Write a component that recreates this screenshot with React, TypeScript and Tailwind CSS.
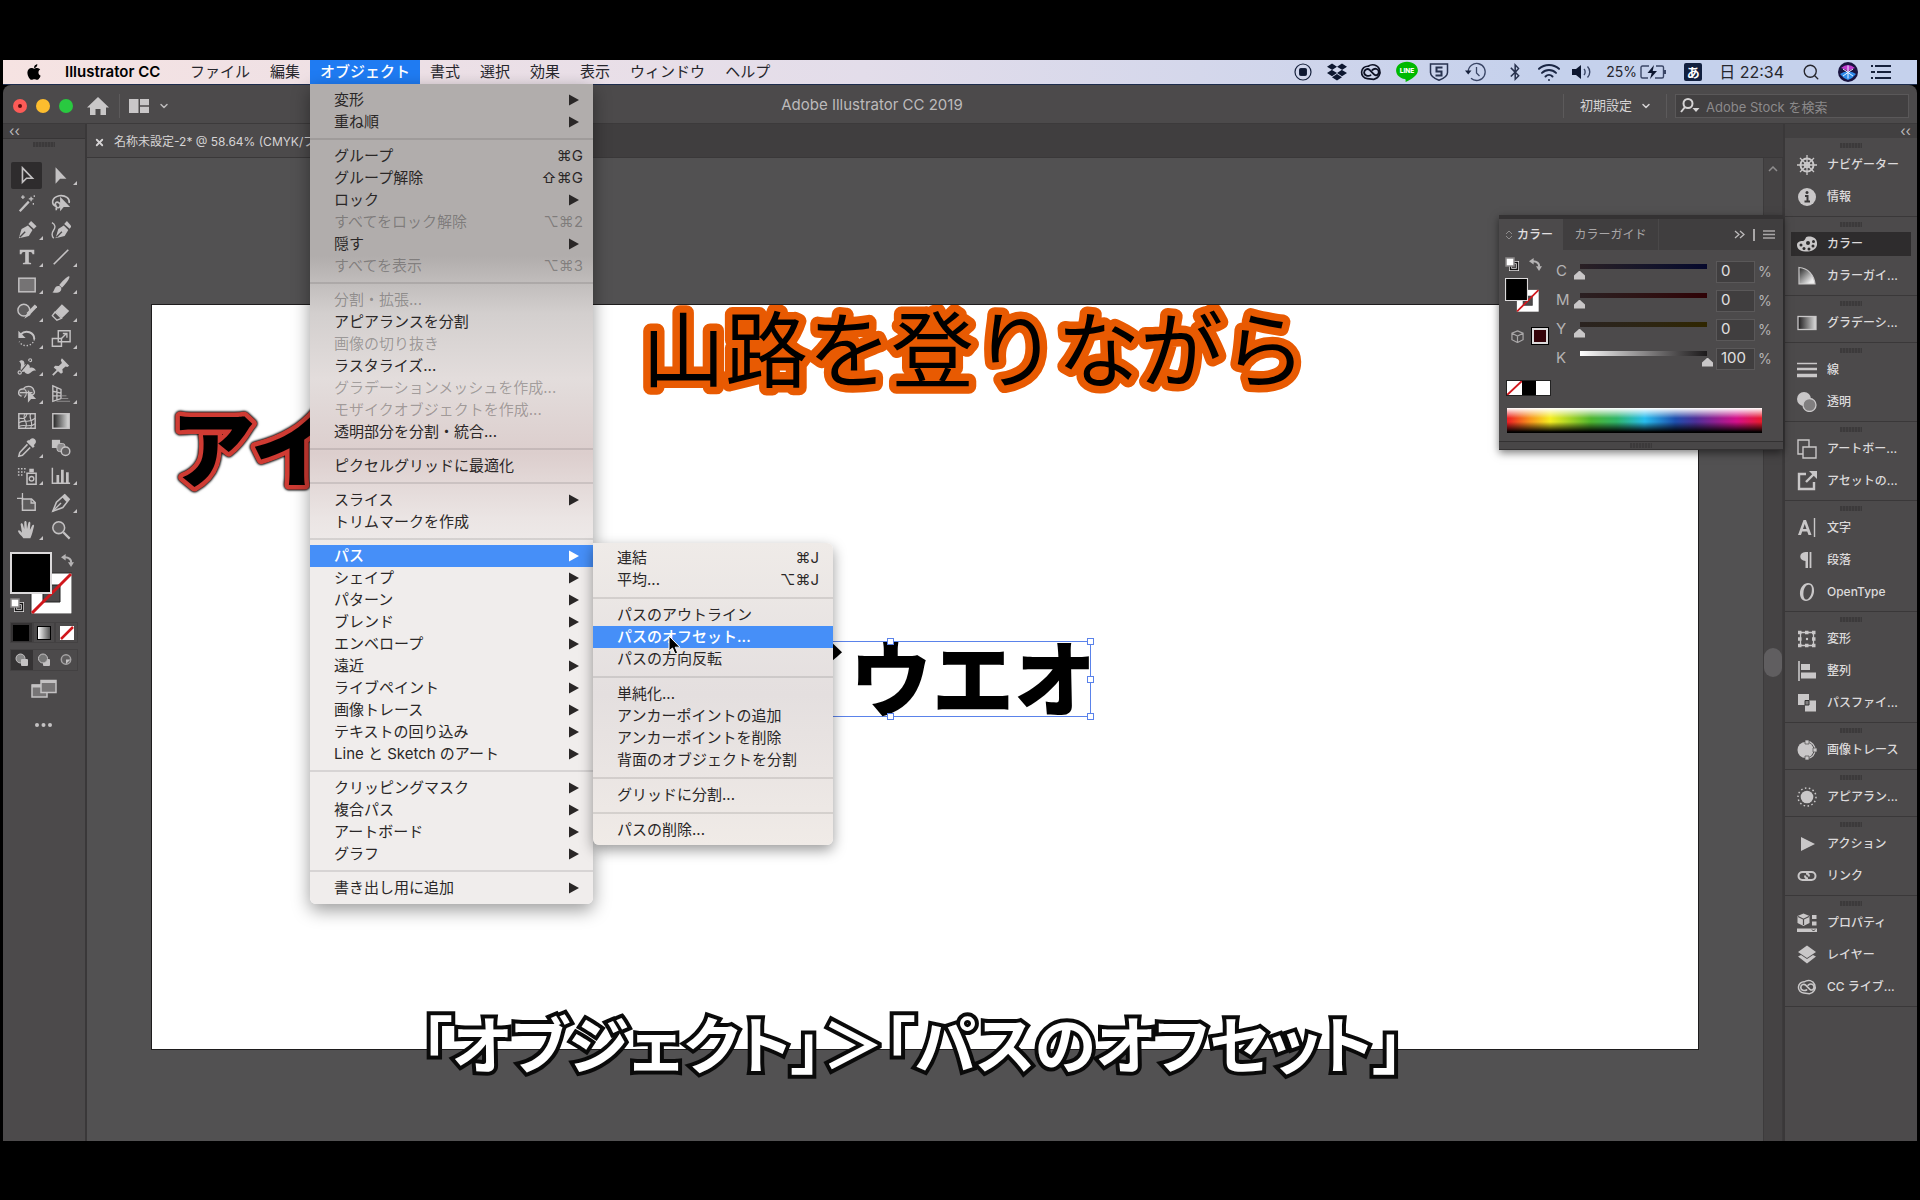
import * as React from "react";
import { FaApple, FaBluetoothB, FaDropbox } from "react-icons/fa";
import { ChevronDown, Search, Wifi, X } from "lucide-react";
import clsx from "clsx";

type Entry = { label: string; keys?: string; sub?: boolean; off?: boolean; on?: boolean } | "-";

const barItems = ["ファイル", "編集", "オブジェクト", "書式", "選択", "効果", "表示", "ウィンドウ", "ヘルプ"];

const objectMenu: Entry[] = [
  { label: "変形", sub: true },
  { label: "重ね順", sub: true },
  "-",
  { label: "グループ", keys: "⌘G" },
  { label: "グループ解除", keys: "⇧⌘G" },
  { label: "ロック", sub: true },
  { label: "すべてをロック解除", keys: "⌥⌘2", off: true },
  { label: "隠す", sub: true },
  { label: "すべてを表示", keys: "⌥⌘3", off: true },
  "-",
  { label: "分割・拡張...", off: true },
  { label: "アピアランスを分割" },
  { label: "画像の切り抜き", off: true },
  { label: "ラスタライズ..." },
  { label: "グラデーションメッシュを作成...", off: true },
  { label: "モザイクオブジェクトを作成...", off: true },
  { label: "透明部分を分割・統合..." },
  "-",
  { label: "ピクセルグリッドに最適化" },
  "-",
  { label: "スライス", sub: true },
  { label: "トリムマークを作成" },
  "-",
  { label: "パス", sub: true, on: true },
  { label: "シェイプ", sub: true },
  { label: "パターン", sub: true },
  { label: "ブレンド", sub: true },
  { label: "エンベロープ", sub: true },
  { label: "遠近", sub: true },
  { label: "ライブペイント", sub: true },
  { label: "画像トレース", sub: true },
  { label: "テキストの回り込み", sub: true },
  { label: "Line と Sketch のアート", sub: true },
  "-",
  { label: "クリッピングマスク", sub: true },
  { label: "複合パス", sub: true },
  { label: "アートボード", sub: true },
  { label: "グラフ", sub: true },
  "-",
  { label: "書き出し用に追加", sub: true },
];

const pathMenu: Entry[] = [
  { label: "連結", keys: "⌘J" },
  { label: "平均...", keys: "⌥⌘J" },
  "-",
  { label: "パスのアウトライン" },
  { label: "パスのオフセット...", on: true },
  { label: "パスの方向反転" },
  "-",
  { label: "単純化..." },
  { label: "アンカーポイントの追加" },
  { label: "アンカーポイントを削除" },
  { label: "背面のオブジェクトを分割" },
  "-",
  { label: "グリッドに分割..." },
  "-",
  { label: "パスの削除..." },
];

function MenuList({ entries, rule, row }: { entries: Entry[]; rule: string; row: string }) {
  return (
    <>
      {entries.map((e, i) =>
        e === "-" ? (
          <div key={i} role="separator" className={clsx("flex items-center", rule)}>
            <div className="h-[2px] w-full bg-black/10" />
          </div>
        ) : (
          <button
            key={i}
            disabled={e.off}
            className={clsx(
              "flex h-[22px] w-full items-center justify-between text-left text-[15px] leading-[22px] whitespace-nowrap",
              row,
              e.on ? "bg-[#468ff8] font-medium text-white" : e.off ? "text-black/30" : "text-[#2a2727]",
            )}
          >
            <span>{e.label}</span>
            {e.keys && <span>{e.keys}</span>}
            {e.sub && (
              <svg viewBox="0 0 10 12" className="mr-1 h-3 w-[10px]" fill="currentColor">
                <path d="M0 0.5 10 6 0 11.5z" />
              </svg>
            )}
          </button>
        ),
      )}
    </>
  );
}

function CloudIcon({ className }: { className: string }) {
  return (
    <svg viewBox="0 0 24 19" className={className} fill="none" stroke="currentColor" strokeLinecap="round">
      <path strokeWidth="1.800" d="M9 3.200A6.700 6.700 0 1 0 8 16.700L15 17.500A8 8 0 1 0 9 3.200z" />
      <path strokeWidth="2" d="M11.500 13C9 14.500 4.500 13.500 4.500 10c0-3.500 4-4.800 6-2.700l5 5c2.500 2 5-.2 5-2.800 0-3-4-5-7-2.200" />
    </svg>
  );
}

function MenuBar() {
  return (
    <header className="relative z-20 flex h-[25px] items-center border-b border-[#1d2c4c] bg-linear-to-r from-[#f6e3e2] via-[#e3ddea] via-45% to-[#c5d1ec] to-80% text-[15px] leading-6 text-[#26262c]">
      <a href="#apple" aria-label="Apple" className="ml-[22px] w-[18px] text-black">
        <FaApple className="size-[18px]" />
      </a>
      <button className="ml-[22px] w-[111px] text-left font-semibold whitespace-nowrap text-black">Illustrator CC</button>
      <nav className="flex h-full pl-1">
        {barItems.map((item) => (
          <div key={item} className="relative h-full">
            <button
              className={clsx("h-6 px-[10px] whitespace-nowrap", item === "オブジェクト" && "bg-[#1f7bf2] font-medium text-white")}
            >
              {item}
            </button>
            {item === "オブジェクト" && <ObjectMenu />}
          </div>
        ))}
      </nav>
      <div className="ml-auto flex items-center pr-[26px]">
        <svg viewBox="0 0 18 18" className="mr-[15px] size-[18px]" fill="none" stroke="#16213c">
          <circle cx="9" cy="9" r="8" strokeWidth="1.200" />
          <rect x="5.500" y="5.500" width="7" height="7" rx="1" fill="#0d1730" />
        </svg>
        <FaDropbox className="mr-[13px] size-5 text-[#0d1730]" />
        <CloudIcon className="mr-[13px] h-[18px] w-[22px] text-[#0d1124]" />
        <svg viewBox="0 0 22 20" className="mr-[10px] h-[22px] w-6">
          <path fill="#00b900" d="M11 .5C5.300.5 1 4 1 8.600c0 4 3.300 7 8 7.900.9.200.8 1.200.7 2.700C15 16.800 21 13 21 8.600 21 4 16.700.5 11 .5z" />
          <text x="11" y="11" textAnchor="middle" fontSize="6" fontWeight="800" fill="#fff" fontFamily="Inter">LINE</text>
        </svg>
        <svg viewBox="0 0 20 18" className="mr-4 h-[18px] w-5" fill="none" stroke="#27324f">
          <path strokeWidth="1.500" d="M1.500 1h17v8.500c0 4-4 6-8.500 7.800C5.500 15.500 1.500 13.500 1.500 9.500z" />
          <path strokeWidth="2" d="M13.500 4.500h-6v4h5v4H6.500" />
        </svg>
        <svg viewBox="0 0 22 20" className="mr-[19px] h-5 w-[22px]" fill="none" stroke="#3a4666" strokeWidth="1.300">
          <path d="M3.200 10A8.500 8.500 0 1 1 6 16.300M11.500 5v6l3 3" />
          <path d="M0 8.500h6.500l-3.300 4z" fill="#16213c" stroke="none" />
        </svg>
        <FaBluetoothB className="mr-[13px] size-[18px] text-[#27324f]" />
        <Wifi className="mr-[11px] size-6 text-[#1b2745]" strokeWidth={2} />
        <svg viewBox="0 0 20 16" className="mr-[14px] h-4 w-5">
          <path fill="#0d1730" d="M0 5h4l5-4v14l-5-4H0z" />
          <path fill="none" stroke="#3a4666" strokeWidth="1.400" d="M12 5c1.500 1.500 1.500 4.500 0 6M15.500 2.500c3 3 3 8 0 11" />
        </svg>
        <span className="mr-[2px] w-8 text-[14px] whitespace-nowrap">25%</span>
        <svg viewBox="0 0 27 16" className="mr-[17px] h-4 w-[27px]" fill="none" stroke="#3a4666" strokeWidth="1.400">
          <path d="M9 2H2.500Q1 2 1 3.500v9Q1 14 2.500 14H8M16 2h6q1.500 0 1.500 1.500v9Q23.500 14 22 14h-7" />
          <path d="M14 1 7.500 9h4.200L10 15l7-8h-4.300z" fill="#0d1730" stroke="none" />
          <path d="M25 6v4" strokeWidth="2" />
        </svg>
        <span className="mr-[17px] h-[18px] w-[18px] rounded-xs bg-[#12203f] text-center text-[13px] leading-[18px] font-bold text-white">あ</span>
        <span className="mr-[18px] text-[16px] whitespace-nowrap">日 22:34</span>
        <Search className="mr-[18px] size-[18px]" strokeWidth={1.800} />
        <svg viewBox="0 0 20 20" className="mr-[13px] size-5">
          <circle cx="10" cy="10" r="10" fill="#1a1440" />
          <path d="M3 6q7-6 14 0-6 2-7 4Q8 7 3 6z" fill="#c03bd0" />
          <path d="M2 12q5-3 8-2 3-1 8 2-3 4-8 6-5-2-8-6z" fill="#2f8bea" />
          <path d="M10 3.500v13M5 7l10 7M15 7 5 14" stroke="#e9f2ff" strokeWidth="1" />
        </svg>
        <svg viewBox="0 0 20 16" className="h-4 w-5" stroke="#16213c" strokeWidth="2">
          <path d="M4 2h16M6 8h14M4 14h16M0 2h2M0 8h4M0 14h2" />
        </svg>
      </div>
    </header>
  );
}

function ObjectMenu() {
  return (
    <div className="absolute top-6 left-0 w-[283px] rounded-b-md bg-[linear-gradient(180deg,#b1adac_0%,#b1adac_21%,#d3cfce_28%,#e3dddc_36%,#dccecd_45%,#ebe5e4_53%,#f0edec_58%)] py-[5px] shadow-[0_6px_18px_rgba(0,0,0,0.4)]">
      <MenuList entries={objectMenu} rule="h-3" row="pl-6 pr-[10px]" />
      <div className="absolute top-[459px] left-full w-[240px] rounded-md rounded-tl-none bg-linear-to-b from-[#efebe8] via-[#e4dfdf] to-[#f0ebe7] py-1 shadow-[0_5px_14px_rgba(0,0,0,0.4)]">
        <MenuList entries={pathMenu} rule="h-[13px]" row="pl-6 pr-[14px]" />
        <svg viewBox="0 0 14 20" className="absolute top-[92px] left-[75px] h-5 w-[14px]">
          <path d="M1 1v15l3.500-3 2.500 6 2.700-1.200-2.500-5.600H12z" fill="#000" stroke="#fff" strokeWidth="1" />
        </svg>
      </div>
    </div>
  );
}

function TitleBar() {
  return (
    <div className="flex h-[39px] items-center rounded-t-lg border-b border-[#3c3a3b] bg-[#4c4a4b] pt-[3px] text-[#bcbabb]">
      <div className="flex w-[178px] items-center">
        <button aria-label="閉じる" className="ml-[10px] size-[14px] rounded-full bg-[#fc5b57] p-[5px]">
          <span className="block size-1 rounded-full bg-[#5c0d0c]" />
        </button>
        <button aria-label="しまう" className="ml-[9px] size-[14px] rounded-full bg-[#fdbd2e]" />
        <button aria-label="拡大" className="ml-[9px] size-[14px] rounded-full bg-[#29c940]" />
        <button aria-label="ホーム" className="ml-[14px]">
          <svg viewBox="0 0 22 20" className="h-5 w-[22px]" fill="#c9c7c8">
            <path d="M11 1 0 11.500h3V19h5.500v-6h5v6H19v-7.500h3z" />
          </svg>
        </button>
        <span className="ml-[10px] h-6 w-px bg-[#5c5a5b]" />
        <button aria-label="レイアウト" className="ml-[9px] flex items-center gap-[9px]">
          <svg viewBox="0 0 20 14" className="h-[14px] w-5" fill="#c9c7c8">
            <path d="M0 0h9.500v14H0zM11 0h9v6.200h-9zM11 7.700h9V14h-9z" />
          </svg>
          <ChevronDown className="size-3" strokeWidth={3} />
        </button>
      </div>
      <h1 className="flex-1 text-center text-[15px]">Adobe Illustrator CC 2019</h1>
      <div className="flex items-center pr-2">
        <span className="h-6 w-px bg-[#5c5a5b]" />
        <button className="flex w-[102px] items-center justify-between pr-[14px] pl-4 text-[13px] whitespace-nowrap text-[#d6d4d5]">
          初期設定
          <ChevronDown className="size-3" strokeWidth={3} />
        </button>
        <span className="mr-2 h-6 w-px bg-[#5c5a5b]" />
        <label className="flex h-6 w-[234px] items-center gap-[6px] border border-[#5a5859] bg-[#424041] pl-1">
          <svg viewBox="0 0 20 16" className="h-4 w-5 shrink-0" fill="none" stroke="#d6d4d5" strokeWidth="2">
            <circle cx="8" cy="5.500" r="4.500" />
            <path d="M5 9 1 14" />
            <path d="M12.500 10h7L16 14z" fill="#d6d4d5" stroke="none" />
          </svg>
          <input
            aria-label="Adobe Stock を検索"
            placeholder="Adobe Stock を検索"
            className="h-full w-full min-w-0 bg-transparent pt-[3px] text-[13px] outline-none placeholder:text-[#8c8a8b]"
          />
        </label>
      </div>
    </div>
  );
}

function Grip() {
  return <div className="mx-auto h-[5px] w-[22px] bg-[repeating-linear-gradient(90deg,#3c3a3b_0_2px,#444243_2px_3px)]" />;
}

/* glyphs are drawn on a 22x22 grid */
const toolGlyphs: [string, boolean, React.ReactNode][] = [
  ["選択", false, <path key="a" d="M6 2v16l4.500-4.500H17z" fill="none" strokeWidth="1.800" />],
  ["ダイレクト選択", true, <path key="a" d="M5 1.500v18l5-5.500h7z" stroke="none" />],
  ["自動選択", false, <><path d="m3 20 10-10.500" strokeWidth="2.500" fill="none" /><path d="M15.500 4v5M13 6.500h5M6.500 2.500v4M4.500 4.500h4M18 11v2M19 2.500v2" strokeWidth="1.400" fill="none" /></>],
  ["なげなわ", false, <><path d="M6 15c-6-2-6-10 3-12 7-1 12 3 11 8M6 15c-3-4 0-6 3-4s0 6-2 5-1 3-1 3" fill="none" strokeWidth="1.800" /><path d="M10 4v16l4-4.500h7z" stroke="none" /></>],
  ["ペン", true, <><path d="m2 20 3-10 7-4 5 5-4 6.500z" stroke="none" /><path d="m12.500 4.500 3-3.500 6 6-3 3z" stroke="none" /><path d="m3 19 6-6" stroke="#4c4a4b" strokeWidth="1.500" /></>],
  ["曲線", false, <><path d="m5 20 3-10 6-4 5 5-4 6.500z" stroke="none" /><path d="m14.500 4.500 3-3.500 5 6-2 2.500z" stroke="none" /><path d="m6 19 6-6" stroke="#4c4a4b" strokeWidth="1.500" /><path d="M1 3c4 2 4 5 2 8s-3 6 0 9" fill="none" strokeWidth="1.500" /></>],
  ["文字", true, <path key="a" d="M3 3h16v5h-2c0-2-1-2.500-4-2.500V17l2.500.5V19h-9v-1.500L9 17V5.500C6 5.500 5 6 5 8H3z" stroke="none" />],
  ["直線", true, <path key="a" d="M3 19 19 3" strokeWidth="1.800" />],
  ["長方形", true, <rect key="a" x="2" y="3.500" width="18" height="15" fill="#757374" strokeWidth="1.600" />],
  ["ブラシ", true, <><path d="M20 1.500c2 1-5 10-8 12.500l-3-3C12 7.500 18 1 20 1.500z" stroke="none" /><path d="M8 12c3 0 4.500 3 2.500 5.500S4 20 1.500 19C4 18 3.500 12 8 12z" stroke="none" /></>],
  ["Shaper", true, <><circle cx="7.500" cy="9" r="6.500" fill="#5e5c5d" strokeWidth="1.600" /><path d="M21 4 12 13.500" strokeWidth="4" /><path d="m12 11 3 3-7 4.500z" stroke="none" /></>],
  ["消しゴム", true, <><path d="M12 2.500 20 10l-8 8-7.500-7.500z" stroke="none" /><path d="m4.500 11-3 4 5 5 5-2z" strokeWidth="1.500" fill="#4c4a4b" /></>],
  ["回転", true, <><path d="M4 6c6-6 15-2 15 5" fill="none" strokeWidth="2.200" /><path d="M1.500 2v8h8z" stroke="none" /><path d="M19 11c-1 8-12 10-16.500 3" fill="none" strokeWidth="1.500" strokeDasharray="1.500 2" /></>],
  ["拡大・縮小", true, <><path d="M8 2h13v12H8zM1.500 10.500h10v8.500h-10z" fill="none" strokeWidth="1.600" /><path d="m11 11 6-6M13 5h4.500v4.500" fill="none" strokeWidth="1.500" /></>],
  ["線幅", true, <><path d="M2 5c5-4 7 1 6 4 3-3 7 0 6 3 3-1 5 0 7 3-3-1-5 1-7 3s-5 0-6-2c-2 1-4 0-4-3s1-4 0-6-1-2-2-2z" stroke="none" /><circle cx="3" cy="17" r="1.800" fill="none" strokeWidth="1.300" /><circle cx="14.500" cy="3.500" r="1.600" fill="none" strokeWidth="1.300" /><path d="m4.500 15.500 9-11" stroke="#4c4a4b" strokeWidth="1.200" /></>],
  ["パペットワープ", true, <><path d="m12 1.500 8 8-2 1.500-2-.5-3.500 3 .5 3.500-2 1.500L3 11.500 4.500 9.500l4 .5L12 6.500l-1.200-3z" stroke="none" /><path d="m2 20 5.500-5.500" strokeWidth="2" /></>],
  ["シェイプ形成", true, <><path d="M5 13.500C0 12 1 5 7 5.500 9 2 17 1 18.500 7c2 3 0 5-3 5.500" fill="#5e5c5d" strokeWidth="1.500" /><path d="M3 9.500h14M8 5c3 3 3 7 0 10" fill="none" strokeWidth="1.200" /><path d="M12 6.500v14l3.500-4H21z" stroke="none" /></>],
  ["遠近グリッド", true, <><path d="M2 2v17l9-3V6zM2 8l9 2M2 13l9 0M6.500 4v13.500" fill="none" strokeWidth="1.500" /><path d="M12 13h5M12 16h7M6 19h15" strokeWidth="1" opacity=".6" /></>],
  ["メッシュ", false, <><rect x="2" y="3" width="18" height="16" fill="none" strokeWidth="1.600" /><path d="M2 13c6-5 10 2 18-5M9 3c-5 6 5 9 0 16M2 8c5 0 7 2 9-5M15 3c-3 5 4 9 0 16M2 17c6-3 12 2 18-3" fill="none" strokeWidth="1.200" /></>],
  ["グラデーション", false, <><defs><linearGradient id="toolGrad"><stop stopColor="#222" /><stop offset="1" stopColor="#ddd" /></linearGradient></defs><rect x="2" y="3" width="18" height="16" fill="url(#toolGrad)" strokeWidth="1.600" /></>],
  ["スポイト", true, <><path d="m13 3 2-2c3-2 7 1 5.500 4.500L18.500 8l1 1-2 2-7-7 2-2z" stroke="none" /><path d="m11.500 7-8.500 9-1 4 4-1 8.500-8.500" fill="none" strokeWidth="1.700" /></>],
  ["ブレンド", false, <><path d="M1 2h9v9H1z" stroke="none" /><rect x="6.500" y="6" width="9" height="9" rx="3" fill="#8d8b8c" strokeWidth="1" /><circle cx="16" cy="14.500" r="4.700" fill="#5e5c5d" strokeWidth="1.600" /></>],
  ["シンボルスプレー", true, <><path d="M11 8h10v12H11z" fill="none" strokeWidth="1.700" /><path d="M13.500 3h5v4h-5z" stroke="none" /><circle cx="16" cy="14" r="2.500" fill="none" strokeWidth="1.500" /><path d="M1 3h10M1 6.500h8M1 10h5" strokeWidth="1.700" strokeDasharray="1.700 1.700" /></>],
  ["棒グラフ", true, <><path d="M1.500 2v17H21" fill="none" strokeWidth="1.600" /><path d="M7.500 10v9M12.500 4v15M18 7v12" strokeWidth="3" /></>],
  ["アートボード", false, <><path d="M6 0v13M0 6h7" strokeWidth="1.400" /><path d="M6 6.500h10l4 4V19H6z" fill="#5e5c5d" strokeWidth="1.600" /><path d="M15.500 7v4H20" fill="none" strokeWidth="1.400" /></>],
  ["スライス", true, <><path d="m2 20 4-10 9-8 5 5-7 9z" fill="none" strokeWidth="1.700" /><path d="m12 4.500 3.500-3 5 5-3.500 3.500z" stroke="none" /><path d="m2 20 9-9" strokeWidth="1.500" /></>],
  ["手のひら", true, <path key="a" d="M7 20c-2-3-5-5-6-8 1-1.500 2.500-.5 4.500 2L4 5c.2-2 2-1.500 2.500 0L8 10 8 2.500c.5-2 2.200-2 2.500 0L11 10l1.500-7c.7-1.600 2.300-1 2.200.6L14.200 11l2.500-5c1-1.300 2.500-.5 2 1-1 4-2 9-4 13z" stroke="none" />],
  ["ズーム", false, <><circle cx="8.500" cy="8.500" r="6.500" fill="#5e5c5d" strokeWidth="1.700" /><path d="m13.500 13.500 7 7" strokeWidth="2.500" /></>],
];

function SwapIcon() {
  return (
    <svg viewBox="0 0 14 14" className="size-[13px]" fill="none" stroke="#b5b3b4" strokeWidth="2.200">
      <path d="M4 3.500c5 0 7 2 7 6" />
      <path d="M5 0v7L0 3.500zM7.500 9H14l-3.200 5z" fill="#b5b3b4" stroke="none" />
    </svg>
  );
}

function DefaultsIcon() {
  return (
    <svg viewBox="0 0 14 14" className="size-[14px]">
      <path d="M5.500 5.500h7v7h-7z" fill="none" stroke="#e8e6e7" strokeWidth="3" />
      <path d="M5.500 5.500h7v7h-7z" fill="none" stroke="#111" strokeWidth="1.500" />
      <path d="M1 1h8v8H1z" fill="#fff" stroke="#8a8889" strokeWidth="1.500" />
    </svg>
  );
}

function FillStroke({ className }: { className: string }) {
  return (
    <svg viewBox="0 0 62 62" className={className}>
      <path d="M21 21h41v41H21z" fill="#fff" stroke="#2c2a2b" />
      <path d="M33 33h17v17H33z" fill="#4c4a4b" stroke="#222" />
      <path d="M22 61 61 22" stroke="#d0171c" strokeWidth="3" />
      <path d="M1 1h40v40H1z" fill="#000" stroke="#dcdadb" strokeWidth="2" />
    </svg>
  );
}

function ToolPanel() {
  return (
    <aside className="w-[84px] shrink-0 border-r-2 border-[#3a3839] bg-[#4c4a4b]">
      <div className="h-[15px] border-b border-[#373536] bg-[#424041] pl-[6px] text-[14px] leading-[13px] text-[#bcbabb]">‹‹</div>
      <div className="pt-[3px]">
        <Grip />
      </div>
      <div className="mt-[15px] ml-2 grid h-[382px] w-[68px] grid-cols-2 grid-rows-14">
        {toolGlyphs.map(([name, more, art], i) => (
          <button
            key={name}
            aria-label={name}
            className={clsx("relative mr-[3px] flex items-center justify-center", i === 0 && "rounded-xs bg-[#2e2c2d]")}
          >
            <svg viewBox="0 0 22 22" className="size-5" fill="#c4c2c3" stroke="#c4c2c3">
              {art}
            </svg>
            {more && (
              <svg viewBox="0 0 4 4" className="absolute -right-[1px] bottom-1 size-[4px]" fill="#c4c2c3">
                <path d="M4 0v4H0z" />
              </svg>
            )}
          </button>
        ))}
      </div>
      <div className="relative mt-2 ml-[7px] h-[66px] w-[68px]">
        <FillStroke className="size-[62px]" />
        <button aria-label="塗りと線を入れ替え" className="absolute top-[2px] right-1"><SwapIcon /></button>
        <button aria-label="初期設定の塗りと線" className="absolute top-[46px] left-0"><DefaultsIcon /></button>
      </div>
      <div className="mt-1 ml-[7px] grid w-[68px] grid-cols-3">
        <button aria-label="カラー" className="flex h-[21px] items-center justify-center border border-[#434142] bg-[#353334]"><span className="size-4 bg-black" /></button>
        <button aria-label="グラデーションの塗り" className="flex h-[21px] items-center justify-center border border-[#434142]"><span className="size-[14px] border border-black bg-linear-to-r from-white to-[#555]" /></button>
        <button aria-label="なし" className="flex h-[21px] items-center justify-center border border-[#434142]">
          <svg viewBox="0 0 14 14" className="size-[14px]"><path d="M0 0h14v14H0z" fill="#fff" /><path d="M1 13 13 1" stroke="#d0171c" strokeWidth="2.500" /></svg>
        </button>
      </div>
      <div className="mt-[6px] ml-[7px] grid w-[68px] grid-cols-3 border border-[#434142]">
        <button aria-label="標準描画" className="flex h-[20px] items-center justify-center bg-[#353334]">
          <svg viewBox="0 0 14 14" className="size-[14px]"><circle cx="5.500" cy="5.500" r="4.500" fill="#888" stroke="#c4c2c3" /><rect x="6" y="6" width="7" height="7" rx="1" fill="#c4c2c3" /></svg>
        </button>
        <button aria-label="背面描画" className="flex h-[20px] items-center justify-center">
          <svg viewBox="0 0 14 14" className="size-[14px]"><rect x="6" y="6" width="7" height="7" rx="1" fill="#c4c2c3" /><circle cx="6" cy="5.500" r="4.500" fill="#777" stroke="#c4c2c3" /></svg>
        </button>
        <button aria-label="内側描画" className="flex h-[20px] items-center justify-center">
          <svg viewBox="0 0 14 14" className="size-[14px]"><circle cx="7" cy="6.500" r="4.700" fill="#5e5c5d" stroke="#a5a3a4" strokeWidth="1.500" /><path d="M7 6.500h4.500L7 11z" fill="#c4c2c3" /></svg>
        </button>
      </div>
      <button aria-label="スクリーンモード" className="mt-2 ml-[28px] block">
        <svg viewBox="0 0 26 20" className="h-5 w-[26px]" fill="#777576" stroke="#c4c2c3" strokeWidth="1.500">
          <path d="M1 6h15v12H1z" /><path d="M1 7h14" strokeWidth="3" />
          <path d="M10 1.500h15v12H10z" /><path d="M10 2.500h15" strokeWidth="3" />
        </svg>
      </button>
      <button aria-label="ツールバーを編集" className="mt-6 ml-8 block">
        <svg viewBox="0 0 17 4" className="h-1 w-[17px]" fill="#c4c2c3"><circle cx="2" cy="2" r="2" /><circle cx="8.500" cy="2" r="2" /><circle cx="15" cy="2" r="2" /></svg>
      </button>
    </aside>
  );
}

const inks = [
  { name: "C", value: 0, bar: "bg-linear-to-r from-[#2a2024] to-[#06082c]" },
  { name: "M", value: 0, bar: "bg-linear-to-r from-[#2a2022] to-[#2e0206]" },
  { name: "Y", value: 0, bar: "bg-linear-to-r from-[#2a2320] to-[#2f2600]" },
  { name: "K", value: 100, bar: "bg-linear-to-r from-white via-[#8a8889] to-[#1c1a1b]" },
];

function ColorPanel() {
  return (
    <section className="absolute top-[91px] right-0 w-[284px] border-t-4 border-[#343233] bg-[#4c4a4b] shadow-[0_3px_8px_rgba(0,0,0,0.5)]">
      <div className="flex h-[31px] items-stretch bg-[#403e3f] text-[12px] text-[#a9a7a8]">
        <button className="flex w-16 items-center gap-1 bg-[#4c4a4b] pl-[6px] font-medium whitespace-nowrap text-[#e2e0e1]">
          <svg viewBox="0 0 8 10" className="h-[10px] w-2" fill="none" stroke="#8f8d8e"><path d="M1 4l3-3 3 3M1 6l3 3 3-3" /></svg>
          カラー
        </button>
        <button className="w-24 border-r border-[#4a4849] whitespace-nowrap">カラーガイド</button>
        <div className="ml-auto flex items-center gap-2 pr-2">
          <svg viewBox="0 0 11 9" className="h-[9px] w-[11px]" fill="none" stroke="#bcbabb" strokeWidth="1.300"><path d="m1 1 4 3.500L1 8M6 1l4 3.500L6 8" /></svg>
          <span className="h-3 w-[2px] bg-[#a9a7a8]" />
          <svg viewBox="0 0 12 9" className="h-[9px] w-3" stroke="#a9a7a8" strokeWidth="1.500"><path d="M0 1h12M0 4.500h12M0 8h12" /></svg>
        </div>
      </div>
      <div className="flex pt-[7px] pl-[6px]">
        <div className="w-[51px]">
          <div className="flex items-center gap-[10px]">
            <DefaultsIcon />
            <SwapIcon />
          </div>
          <FillStroke className="mt-[7px] size-[34px]" />
          <div className="mt-4 flex items-center gap-2 pl-[6px]">
            <svg viewBox="0 0 14 14" className="size-[13px]" fill="none" stroke="#a9a7a8" strokeWidth="1.300"><path d="M7 1 13 3.500v7L7 13.500 1 10.500v-7zM1 3.500 7 6.500l6-3M7 6.500v7" /></svg>
            <span className="size-4 border-2 border-[#dcdadb] bg-[#35040a] outline outline-black" />
          </div>
        </div>
        <div>
          {inks.map((ink) => (
            <div key={ink.name} className="flex h-[29px] items-center text-[15px] text-[#b5b3b4]">
              <label htmlFor={`ink-${ink.name}`} className="w-[18px]">{ink.name}</label>
              <div className="grid w-[139px] pt-px">
                <div className={clsx("mx-[6px] mt-[2px] h-[5px] [grid-area:1/1]", ink.bar)} />
                <input
                  id={`ink-${ink.name}`}
                  type="range"
                  defaultValue={ink.value}
                  className="h-5 w-full appearance-none bg-transparent [grid-area:1/1] [&::-webkit-slider-thumb]:mt-[6px] [&::-webkit-slider-thumb]:h-[9px] [&::-webkit-slider-thumb]:w-[11px] [&::-webkit-slider-thumb]:appearance-none [&::-webkit-slider-thumb]:bg-[#c9c7c8] [&::-webkit-slider-thumb]:[clip-path:polygon(50%_0,100%_55%,100%_100%,0_100%,0_55%)]"
                />
              </div>
              <input
                aria-label={`${ink.name} %`}
                defaultValue={ink.value}
                className="ml-[3px] h-[22px] w-[39px] border border-[#5a5859] bg-[#403e3f] pl-1 text-[15px] text-[#e2e0e1] outline-none"
              />
              <span className="ml-[3px] text-[14px]">%</span>
            </div>
          ))}
        </div>
      </div>
      <div className="mt-[7px] ml-[7px] flex w-[45px] border border-[#222]">
        <svg viewBox="0 0 15 14" className="h-[14px] w-[15px]"><path d="M0 0h15v14H0z" fill="#fff" /><path d="M0 14 15 0" stroke="#d0171c" strokeWidth="2" /></svg>
        <span className="h-[14px] flex-1 bg-black" />
        <span className="h-[14px] flex-1 bg-white" />
      </div>
      <div className="mt-3 mr-[21px] ml-2 h-[25px] border-b border-black bg-[linear-gradient(180deg,#fff_0%,transparent_42%,transparent_58%,#000_100%),linear-gradient(90deg,#ec1c24,#f7941d_9%,#f5ee21_17%,#4fb52f_33%,#30b56a_43%,#28bdee_54%,#1f4fae_66%,#4e3098_74%,#d4108a_90%,#e81c2a_100%)]" />
      <div className="mt-2 h-[9px] border-t border-b border-[#333132] bg-[#484647] pt-px">
        <Grip />
      </div>
    </section>
  );
}

const handleSpots = [
  "-top-[4px] -left-[4px]",
  "-top-[4px] left-[197px]",
  "-top-[4px] -right-[4px]",
  "top-[34px] -right-[4px]",
  "-bottom-[4px] -right-[4px]",
  "-bottom-[4px] left-[197px]",
];

function Workspace() {
  return (
    <main className="relative flex min-w-0 flex-1 flex-col">
      <div className="flex h-[34px] border-b border-[#3a3839] bg-[#403e3f]">
        <div className="flex w-[420px] items-center gap-[9px] bg-[#4c4a4b] pt-[3px] pl-[7px] text-[12px] whitespace-nowrap text-[#d6d4d5]">
          <button aria-label="閉じる"><X className="size-[11px]" strokeWidth={4} /></button>
          名称未設定-2* @ 58.64% (CMYK/プレビュー)
        </div>
      </div>
      <div className="flex flex-1 bg-[#525152]">
        <div className="flex flex-1 pt-[146px] pr-16 pb-[91px] pl-16">
          <div className="relative flex-1 border border-[#1e1c1d] bg-white text-black">
            <svg className="absolute inset-0 size-full overflow-hidden" strokeLinejoin="round">
              <text x="490" y="76" fontSize="83" stroke="#e85a02" strokeWidth="15" className="[paint-order:stroke]">
                山路を登りながら
              </text>
              <text
                x="19"
                y="176"
                fontSize="84"
                fontWeight="900"
                stroke="#cf3b33"
                strokeWidth="9"
                className="[filter:drop-shadow(0_0_1px_#000)_drop-shadow(0_0_1px_#000)] [paint-order:stroke]"
              >
                アイウエオ
              </text>
            </svg>
            <div className="absolute top-[336px] left-[537px] h-[76px] w-[402px] border border-[#5a82ea]">
              <p className="-mt-[2px] text-[82px] leading-[82px] font-black whitespace-nowrap">アイウエオ</p>
              {handleSpots.map((spot) => (
                <span key={spot} className={clsx("absolute size-[7px] border border-[#5a82ea] bg-white", spot)} />
              ))}
            </div>
          </div>
        </div>
        <div className="w-5 border-x border-[#3d3b3c] bg-[#454344]">
          <svg viewBox="0 0 10 6" className="mx-auto mt-2 h-[6px] w-[10px]" fill="none" stroke="#8f8d8e" strokeWidth="1.500"><path d="m1 5 4-4 4 4" /></svg>
          <div className="mt-[476px] h-[29px] rounded-full bg-[#605e60]" />
        </div>
      </div>
      <ColorPanel />
    </main>
  );
}

const dock: [string, React.ReactNode][][] = [
  [
    ["ナビゲーター", <><circle cx="10" cy="10" r="6.500" fill="none" strokeWidth="2" /><circle cx="10" cy="10" r="2.500" fill="none" strokeWidth="1.500" /><path d="M10 0v20M0 10h20M3 3l14 14M17 3 3 17" strokeWidth="1.300" /></>],
    ["情報", <><circle cx="10" cy="10" r="9" stroke="none" /><path d="M8 9h2.500v5.500M7.500 14.500h5.500" fill="none" stroke="#3a3839" strokeWidth="2" /><circle cx="10" cy="5.500" r="1.500" fill="#3a3839" stroke="none" /></>],
  ],
  [
    ["カラー", <><path d="M9 3.500c1-1.500 10-2 11 5S14 18 8 17.500 0 14 0 11s3-4 5-4c3 0 3-2 4-3.500z" stroke="none" /><g fill="#2e2c2d" stroke="none"><circle cx="4" cy="11" r="1.500" /><circle cx="7" cy="14.500" r="1.500" /><circle cx="12" cy="15" r="1.500" /><circle cx="16" cy="12" r="1.500" /><circle cx="16.500" cy="7.500" r="1.500" /><circle cx="11" cy="9" r="2" /></g></>],
    ["カラーガイ...", <><defs><linearGradient id="guide" x2="1" y2="1"><stop stopColor="#222" /><stop offset=".8" stopColor="#eee" /></linearGradient></defs><path d="M2 1.500C11 2 17 9 18 18H2z" fill="url(#guide)" strokeWidth="1.200" /></>],
  ],
  [
    ["グラデーシ...", <><defs><linearGradient id="dockGrad"><stop stopColor="#1c1a1b" /><stop offset="1" stopColor="#ddd" /></linearGradient></defs><rect x="1" y="3.500" width="18" height="13" fill="url(#dockGrad)" strokeWidth="1.300" /></>],
  ],
  [
    ["線", <><path d="M0 3.500h20" strokeWidth="1.500" /><path d="M0 9h20" strokeWidth="2.500" /><path d="M0 15.500h20" strokeWidth="3.500" /></>],
    ["透明", <><circle cx="7" cy="7" r="7" stroke="none" /><circle cx="12.500" cy="13" r="6.500" fill="#807e7f" strokeWidth="1.300" /></>],
  ],
  [
    ["アートボー...", <><path d="M1 1h11v14H1z" fill="none" strokeWidth="1.400" /><path d="M6 8h13v11H6z" fill="#4c4a4b" strokeWidth="1.400" /></>],
    ["アセットの...", <><path d="M9 3H2v15h15v-7" fill="none" strokeWidth="2.400" /><path d="m9 11 8-8" strokeWidth="2.400" /><path d="M12 0h8v8z" stroke="none" /></>],
  ],
  [
    ["文字", <><path d="M7.500 2h-1L1 17h3l1.200-3.500h5L11.500 17h3L9 2zM6 11l1.700-5L9.500 11z" stroke="none" fillRule="evenodd" /><path d="M17.500 0v19" strokeWidth="1.400" /></>],
    ["段落", <><path d="M11 2v16h-2.500v-7C1.500 11 1.500 2 8.500 2z" stroke="none" /><path d="M13.500 2v16" strokeWidth="1.800" /></>],
    ["OpenType", <path key="a" fillRule="evenodd" stroke="none" d="M11 1c4.500 0 6.500 4 6 9-.6 5-4 9-8 9s-6.500-4-6-9S7 1 11 1zm1 1.800C9 2.500 7 6 6.500 10S7 17 9 17.500s5-3 5.700-7.500S14.500 3 12 2.800z" />],
  ],
  [
    ["変形", <><path d="M3.500 3.500h13v13h-13z" fill="none" strokeWidth="1.300" /><path d="M1 3.500h18M1 16.500h18M1 10h4M15 10h4" strokeWidth="3.500" strokeDasharray="3.500 3.500" /><circle cx="10" cy="10" r="1.200" stroke="none" /></>],
    ["整列", <><path d="M2 0v20" strokeWidth="1.600" /><path d="M4 3h9v6H4zM4 11.500h15v6H4z" stroke="none" /></>],
    ["パスファイ...", <><path d="M1 1h11v11H1zM8 7.500h11v11H8z" stroke="none" /><path d="M8 7.500h4V12H8z" fill="#807e7f" stroke="#333" strokeWidth="1" /></>],
  ],
  [["画像トレース", <><circle cx="8.500" cy="10" r="8" stroke="none" /><path d="M10 1.500c5 0 8 4 8 8.500s-3 8.500-8 8.500" fill="none" strokeWidth="1.300" /><path d="M8 0h4v4H8zM8 16h4v4H8zM16 8h4v4h-4z" stroke="#4c4a4b" strokeWidth=".7" /></>]],
  [["アピアラン...", <><circle cx="10" cy="10" r="6.300" stroke="none" /><circle cx="10" cy="10" r="9" fill="none" strokeWidth="1.500" strokeDasharray="1.500 2.500" /></>]],
  [
    ["アクション", <path key="a" d="M4 3v14l14-7z" stroke="none" />],
    ["リンク", <path key="a" d="M12 6H5.500a4 4 0 0 0 0 8H9M8 14h6.500a4 4 0 0 0 0-8H11M12 10.500c0-2-1-3-3-3M8 9.500c0 2 1 3 3 3" fill="none" strokeWidth="2" />],
  ],
  [
    ["プロパティ", <><path d="m6.500.5 6 2.500v7l-6 3-6-3V3z" stroke="none" /><path d="m1 3.500 5.500 2.700L12 3.500M6.500 6.200V12" fill="none" stroke="#4c4a4b" strokeWidth="1.200" /><path d="M15 2h4.500v4H15zM15 8.500h4.500v4H15zM0 15.500h20V19H0z" stroke="none" /><path d="m15 16.500 1.500 1.500 1.500-1.500" fill="none" stroke="#333" /></>],
    ["レイヤー", <path key="a" d="m10 .5 9 6.500-9 6-9-6zM1 11.500l3-1.500 6 4 6-4 3 1.500-9 7z" stroke="none" />],
    ["CC ライブ...", null],
  ],
];

function Dock() {
  return (
    <aside className="w-[134px] shrink-0 border-l-2 border-[#3a3839] bg-[#4c4a4b]">
      <div className="h-[14px] bg-[#424041] pr-[6px] text-right text-[14px] leading-[13px] text-[#bcbabb]">‹‹</div>
      {dock.map((group, g) => (
        <div key={g} className="border-b border-[#3a3839] px-[6px] pt-[5px] pb-[3px]">
          <Grip />
          <div className="flex flex-col gap-2 pt-[5px] pb-1">
            {group.map(([name, art]) => (
              <button
                key={name}
                className={clsx(
                  "flex h-6 items-center gap-[10px] pl-[6px] text-[12px] font-medium whitespace-nowrap text-[#dcdadb]",
                  name === "カラー" && "bg-[#2e2c2d]",
                )}
              >
                {art ? (
                  <svg viewBox="0 0 20 20" className="size-5 shrink-0" fill="#c9c7c8" stroke="#c9c7c8">{art}</svg>
                ) : (
                  <CloudIcon className="h-[18px] w-5 shrink-0 text-[#c9c7c8]" />
                )}
                {name}
              </button>
            ))}
          </div>
        </div>
      ))}
    </aside>
  );
}

export default function App() {
  return (
    <div lang="ja" className="relative flex min-h-screen flex-col bg-black px-[3px] pt-[60px] pb-[59px] font-['Inter','Noto_Sans_CJK_JP',sans-serif]">
      <MenuBar />
      <TitleBar />
      <div className="flex flex-1">
        <ToolPanel />
        <Workspace />
        <Dock />
      </div>
      <p className="absolute bottom-[113px] left-[421px] z-30 text-[62px] leading-[80px] font-bold whitespace-nowrap text-white [font-feature-settings:'palt'] [paint-order:stroke_fill] [-webkit-text-stroke:8px_#0a0a0a]">
        「オブジェクト」＞「パスのオフセット」
      </p>
    </div>
  );
}
